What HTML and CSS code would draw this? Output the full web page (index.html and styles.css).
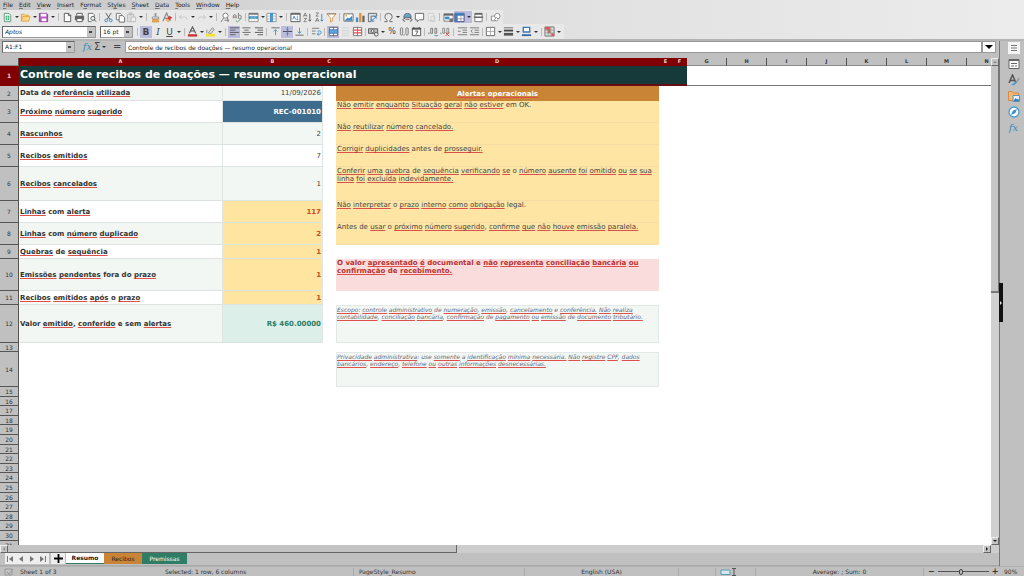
FILE: index.html
```html
<!DOCTYPE html>
<html lang="pt-BR">
<head>
<meta charset="utf-8">
<title>Controle de recibos de doações</title>
<link rel="stylesheet" href="styles.css">
</head>
<body>
<svg class="defs" aria-hidden="true">
  <symbol id="new" viewBox="0 0 12 12"><path d="M2.5 1.5h5l2 2v7h-7z" fill="#fff" stroke="#5a9a78"/><path d="M4 4h4v5H4z" fill="#43a878"/><path d="M4 6.5h4M6 4v5" stroke="#fff" stroke-width=".6"/></symbol>
  <symbol id="open" viewBox="0 0 12 12"><path d="M1.5 10V2.500h3l1 1h4V5" fill="#f6d68c" stroke="#e0a040"/><path d="M1.500 10l1.500-5h8l-1.500 5z" fill="#fbd589" stroke="#e5a648"/></symbol>
  <symbol id="save" viewBox="0 0 12 12"><path d="M1.500 1.500h8l1 1v8h-9z" fill="#b65fc0" stroke="#923ba0"/><path d="M3 2h6v3H3zM4 7h5v3H4z" fill="#fff"/></symbol>
  <symbol id="doc" viewBox="0 0 12 12"><path d="M2.500 1.500h5l2 2v7h-7zM7 1.500V4h2.500" fill="#fff" stroke="#555"/></symbol>
  <symbol id="print" viewBox="0 0 12 12"><path d="M3 4V1.500h6V4" fill="#fff" stroke="#555"/><path d="M1 4h10v5H1z" fill="#666"/><path d="M3 7h6v3.500H3z" fill="#fff" stroke="#555"/></symbol>
  <symbol id="preview" viewBox="0 0 12 12"><path d="M9 5V3L7.500 1.500h-5v9H6" fill="#fff" stroke="#666"/><circle cx="7.500" cy="7" r="2.200" fill="#e4edf4" stroke="#555"/><path d="M9 8.500l2 2" stroke="#444"/></symbol>
  <symbol id="cut" viewBox="0 0 12 12"><path d="M3 1l4.500 7M9 1L4.500 8" stroke="#555" fill="none"/><circle cx="3.500" cy="9.200" r="1.500" fill="none" stroke="#3b83bd"/><circle cx="8.500" cy="9.200" r="1.500" fill="none" stroke="#3b83bd"/></symbol>
  <symbol id="copy" viewBox="0 0 12 12"><path d="M1.500 1.500h4.500l1 1v6H1.500z" fill="#fff" stroke="#777"/><path d="M4.500 4h4l2 2v5h-6z" fill="#fff" stroke="#666"/></symbol>
  <symbol id="paste" viewBox="0 0 12 12"><path d="M1.500 2.500h7v8h-7zM3.500 1h3v2h-3z" fill="#ddd" stroke="#bbb"/><path d="M5.500 5.500h5v5h-5z" fill="#eee" stroke="#bbb"/></symbol>
  <symbol id="brush" viewBox="0 0 12 12"><path d="M5 1h2v4H5z" fill="#999"/><path d="M2.500 5.500h7v2h-7z" fill="#fff" stroke="#777" stroke-width=".8"/><path d="M3 8h6l.5 3h-7z" fill="#f0a848" stroke="#c98230" stroke-width=".6"/></symbol>
  <symbol id="clear" viewBox="0 0 12 12"><path d="M1 10L5 1l4 9M2.500 7H7" stroke="#888" fill="none" stroke-width="1.200"/><path d="M4 9l4-5 3 2-4 5z" fill="#e23b3b"/><path d="M4 9l1.500-2 3 2L7 11z" fill="#f6c070"/></symbol>
  <symbol id="undo" viewBox="0 0 12 12"><path d="M4 3L1.500 5.500 4 8M2 5.500h5q3 0 3 3" fill="none" stroke="#c6c6c6"/></symbol>
  <symbol id="redo" viewBox="0 0 12 12"><path d="M8 3l2.500 2.500L8 8M10 5.500H5q-3 0-3 3" fill="none" stroke="#c6c6c6"/></symbol>
  <symbol id="find" viewBox="0 0 12 12"><circle cx="6" cy="4" r="2.800" fill="#fff" stroke="#777"/><path d="M4 6.500L1 11M8 6l1 5M5 9h5" stroke="#777" fill="none"/></symbol>
  <symbol id="spell" viewBox="0 0 12 12"><path d="M1.500 7V4.500q0-1.500 1.500-1.500t1.500 1.500V7M1.500 5.500h3M7 1v6M7 4q3-1.500 3 1.500T7 7" stroke="#777" fill="none"/><path d="M4 9l2 2 4-4" stroke="#60a070" fill="none"/></symbol>
  <symbol id="row" viewBox="0 0 12 12"><path d="M1 1.500h10v9H1z" fill="#fff" stroke="#777" stroke-width=".8"/><path d="M1 1h10v2H1z" fill="#777"/><path d="M1 4.500h10v3H1z" fill="#3d97d3"/><path d="M4.300 3v7.500M7.600 3v7.500" stroke="#ccc" stroke-width=".7"/></symbol>
  <symbol id="col" viewBox="0 0 12 12"><path d="M1 1.500h10v9H1z" fill="#fff" stroke="#777" stroke-width=".8"/><path d="M4.300 1h3.400v10H4.300z" fill="#3d97d3"/><path d="M1 4.500h10M1 7.500h10" stroke="#999" stroke-width=".7"/></symbol>
  <symbol id="sort" viewBox="0 0 12 12"><path d="M1 1.500h10v9H1z" fill="#fff" stroke="#555"/><path d="M1 1h10v2H1z" fill="#666"/><path d="M3 8l1.500-3.500L6 8" stroke="#3d87c3" fill="none"/><path d="M8 4v5M7 8l1 1 1-1" stroke="#3d87c3" fill="none" stroke-width=".8"/></symbol>
  <symbol id="asc" viewBox="0 0 12 12"><path d="M1.500 5L3.500 1l2 4M2 4h3M2 7h3L2 10.500h3" stroke="#777" fill="none" stroke-width=".9"/><path d="M8.500 2v8M7 8.500L8.500 10 10 8.500" stroke="#555" fill="none"/></symbol>
  <symbol id="desc" viewBox="0 0 12 12"><path d="M2 1h3L2 4.500h3M1.500 10.500l2-4 2 4M2 9.500h3" stroke="#777" fill="none" stroke-width=".9"/><path d="M8.500 2v8M7 8.500L8.500 10 10 8.500" stroke="#3d87c3" fill="none"/></symbol>
  <symbol id="filter" viewBox="0 0 12 12"><path d="M1 2h10L7 6.500V10L5 11V6.500z" fill="#fff" stroke="#e09850"/><path d="M1 2h10" stroke="#777"/></symbol>
  <symbol id="image" viewBox="0 0 12 12"><path d="M1 2h10v8H1z" fill="#fff" stroke="#666"/><path d="M2 9l3-3 1.500 1L10 4v5.500H2z" fill="#3d8ec9"/><circle cx="3.500" cy="4" r="1" fill="#e5b34a"/></symbol>
  <symbol id="chart" viewBox="0 0 12 12"><path d="M1 6h2.500v5H1z" fill="#3d8ec9"/><path d="M4.500 1H7v10H4.500z" fill="#e89030"/><path d="M8 4h2.500v7H8z" fill="#666"/></symbol>
  <symbol id="pivot" viewBox="0 0 12 12"><path d="M1.500 1.500h9v3h-6v6h-3z" fill="#cfe4f3" stroke="#666"/><path d="M5.500 9.500l4-4M7.500 5h2.500v2.500M8 10H5.500V7.500" stroke="#3d87c3" fill="none"/></symbol>
  <symbol id="omega" viewBox="0 0 12 12"><path d="M1.500 10.500h3V9Q2 7.500 2 5q0-3.500 4-3.500T10 5q0 2.500-2.500 4v1.500h3" stroke="#666" fill="none"/></symbol>
  <symbol id="link" viewBox="0 0 12 12"><path d="M2 6q0-4.500 4-4.500T10 6z" fill="#63a8c8" stroke="#667"/><path d="M4 8h4M3.500 7q-2.500 0-2.500 1.500T3.500 10M8.500 7q2.500 0 2.500 1.500T8.500 10" stroke="#555" fill="none"/></symbol>
  <symbol id="comment" viewBox="0 0 12 12"><path d="M1.500 1.500h9v7H6l-2.500 2v-2h-2z" fill="#fff" stroke="#666"/></symbol>
  <symbol id="header" viewBox="0 0 12 12"><path d="M2.500 1.500h6v8h-6zM5.500 4.500h4v6h-4z" fill="#eee" stroke="#ccc"/></symbol>
  <symbol id="area" viewBox="0 0 12 12"><path d="M1 2h10v8H1z" fill="#fff" stroke="#777"/><path d="M1 2h10v2H1z" fill="#666"/><path d="M2 5h5v3H2z" fill="#3d8ec9"/><path d="M7 7h4v4H7z" fill="#777"/></symbol>
  <symbol id="freeze" viewBox="0 0 12 12"><path d="M1 1.500h10v9H1z" fill="#fff" stroke="#447"/><path d="M1 1h10v3H1zM1 4h3v7H1z" fill="#3d7ec0"/><path d="M7.500 1v10M1 7.500h10" stroke="#779" stroke-width=".7"/></symbol>
  <symbol id="split" viewBox="0 0 12 12"><path d="M2 1.500h8v9H2z" fill="#fff" stroke="#777"/><path d="M2 1h8v2H2zM1 5h10v1.500H1z" fill="#666"/></symbol>
  <symbol id="shapes" viewBox="0 0 12 12"><path d="M1.500 4.500h5v5h-5z" fill="#fff" stroke="#888"/><circle cx="8" cy="4.500" r="3" fill="#fff" stroke="#888"/><path d="M5 8l2-2 2 2-2 2z" fill="#fff" stroke="#888"/></symbol>
  <symbol id="fontcolor" viewBox="0 0 12 12"><path d="M2.500 8L6 1l3.500 7M4 5.500h4" stroke="#555" fill="none" stroke-width="1.200"/><path d="M1 9h10v2.500H1z" fill="#c9302c"/></symbol>
  <symbol id="marker" viewBox="0 0 12 12"><path d="M4 7l4-5 2 1.500L7 8H4z" fill="#ddd" stroke="#777" stroke-width=".8"/><path d="M2 4v4" stroke="#888"/><path d="M1 8.500h10v3H1z" fill="#f2e13a"/></symbol>
  <symbol id="left" viewBox="0 0 12 12"><path d="M1 2h10M1 4.500h6M1 7h10M1 9.500h6" stroke="#555"/></symbol>
  <symbol id="center" viewBox="0 0 12 12"><path d="M1.500 2h9M3.500 4.500h5M1.500 7h9M3.500 9.500h5" stroke="#666"/></symbol>
  <symbol id="right" viewBox="0 0 12 12"><path d="M2 2h9M5 4.500h6M2 7h9M5 9.500h6" stroke="#555"/></symbol>
  <symbol id="vtop" viewBox="0 0 12 12"><path d="M1.500 2h9" stroke="#666"/><path d="M6 10V4M4 6l2-2 2 2" stroke="#4a90c0" fill="none"/></symbol>
  <symbol id="vmid" viewBox="0 0 12 12"><path d="M1 6h10" stroke="#445"/><path d="M6 1v10M4.500 3L6 4.500 7.500 3M4.500 9L6 7.500 7.500 9" stroke="#4a70b0" fill="none" stroke-width=".8"/></symbol>
  <symbol id="vbot" viewBox="0 0 12 12"><path d="M1.500 10h9" stroke="#666"/><path d="M6 2v6M4 6l2 2 2-2" stroke="#4a90c0" fill="none"/></symbol>
  <symbol id="wrap" viewBox="0 0 12 12"><path d="M1 2.500h8M1 5.500h4M1 8.500h4" stroke="#777"/><path d="M7 5.500h2.500q1.500 0 1.500 1.500T9.500 9H7M8.500 7L7 9l1.500 1.500" stroke="#3d8ec9" fill="none"/></symbol>
  <symbol id="merge" viewBox="0 0 12 12"><path d="M1.500 1.500h9v9h-9zM6 1v3M6 8v3" fill="#fff" stroke="#667"/><path d="M1.500 4h9v4h-9z" fill="#5aa6dc" stroke="#3a6ea8" stroke-width=".8"/></symbol>
  <symbol id="faint" viewBox="0 0 12 12"><path d="M2 2h8M2 5h8M2 8h8M2 10.500h8" stroke="#d2d2d2"/></symbol>
  <symbol id="unmerge" viewBox="0 0 12 12"><path d="M1.500 1.500h9v9h-9zM6 1v10" fill="#fff" stroke="#777"/><path d="M1 4.500h10M1 7.500h10" stroke="#e05050" stroke-width="1.200"/></symbol>
  <symbol id="money" viewBox="0 0 12 12"><path d="M.5 3h10v5H.5z" fill="#bbb" stroke="#555"/><circle cx="5" cy="5.500" r="1.500" fill="#fff" stroke="#555"/><circle cx="9" cy="9" r="2" fill="#eee" stroke="#555"/></symbol>
  <symbol id="num" viewBox="0 0 12 12"><path d="M1.500 3q0-1 1.300-1T4 3v5.500Q4 10 2.800 10T1.500 8.500zM7.500 3q0-1 1.300-1T10 3v5.500Q10 10 8.800 10T7.500 8.500zM5.500 9v1.500" fill="none" stroke="#777"/></symbol>
  <symbol id="date" viewBox="0 0 12 12"><path d="M1.500 2.500h9v8h-9z" fill="#fff" stroke="#555"/><path d="M1 2h10v2H1z" fill="#555"/><path d="M3 1v2M9 1v2M4.500 5.500h3L5.500 9.500" stroke="#555" fill="none"/></symbol>
  <symbol id="adddec" viewBox="0 0 12 12"><path d="M1 7v2M3 2.500h2V8H3zM7.500 2.500h2V8h-2z" fill="none" stroke="#777"/><path d="M7 10.500h4" stroke="#4a90c0"/></symbol>
  <symbol id="deldec" viewBox="0 0 12 12"><path d="M1 7v2M3 2.500h2V8H3zM7.500 2.500h2V8h-2z" fill="none" stroke="#888"/><path d="M6 7l4 4M10 7l-4 4" stroke="#d84848"/></symbol>
  <symbol id="indent" viewBox="0 0 12 12"><path d="M1 2h10M6 4.500h5M6 7h5M1 9.500h10M1 5.700h3" stroke="#777"/></symbol>
  <symbol id="outdent" viewBox="0 0 12 12"><path d="M1 2h10M6 4.500h5M6 7h5M1 9.500h10M4 4L2 5.700 4 7.500" stroke="#777" fill="none"/></symbol>
  <symbol id="border" viewBox="0 0 12 12"><path d="M1.500 1.500h9v9h-9z" fill="#fff" stroke="#666"/><path d="M6 2v8M2 6h8" stroke="#aaa"/></symbol>
  <symbol id="lines" viewBox="0 0 12 12"><path d="M1 2h10" stroke="#666"/><path d="M1 5h10" stroke="#444" stroke-width="2"/><path d="M1 9h10" stroke="#555" stroke-width="3"/></symbol>
  <symbol id="bcolor" viewBox="0 0 12 12"><path d="M2.500 1.500h7v5h-7z" fill="#fff" stroke="#3a78b4" stroke-width="1.500"/><path d="M1 9h10v2H1z" fill="#3569a8"/></symbol>
  <symbol id="cond" viewBox="0 0 12 12"><path d="M1 1h10v10H1z" fill="#ddd" stroke="#777"/><path d="M1 1h6v3H1zM4 4h3v4H4zM8 8h3v3H8z" fill="#e05a50"/><path d="M4.500 1v10M7.500 1v10M1 4.500h10M1 7.500h10" stroke="#888" stroke-width=".6"/></symbol>
</svg>

<header class="top">
  <nav class="menu">
    <a href="#"><u>F</u>ile</a><a href="#"><u>E</u>dit</a><a href="#"><u>V</u>iew</a><a href="#"><u>I</u>nsert</a><a href="#">F<u>o</u>rmat</a><a href="#">St<u>y</u>les</a><a href="#"><u>S</u>heet</a><a href="#"><u>D</u>ata</a><a href="#"><u>T</u>ools</a><a href="#"><u>W</u>indow</a><a href="#"><u>H</u>elp</a>
  </nav>
  <div class="bar">
    <button class="drop" aria-label="New"><svg><use href="#new"/></svg></button>
    <button class="drop" aria-label="Open"><svg><use href="#open"/></svg></button>
    <button class="drop" aria-label="Save"><svg><use href="#save"/></svg></button>
    <i></i>
    <button aria-label="Export"><svg><use href="#doc"/></svg></button>
    <button aria-label="Print"><svg><use href="#print"/></svg></button>
    <button aria-label="Preview"><svg><use href="#preview"/></svg></button>
    <i></i>
    <button aria-label="Cut"><svg><use href="#cut"/></svg></button>
    <button aria-label="Copy"><svg><use href="#copy"/></svg></button>
    <button class="drop" aria-label="Paste"><svg><use href="#paste"/></svg></button>
    <i></i>
    <button aria-label="Clone"><svg><use href="#brush"/></svg></button>
    <button aria-label="Clear"><svg><use href="#clear"/></svg></button>
    <i></i>
    <button class="drop" aria-label="Undo"><svg><use href="#undo"/></svg></button>
    <button class="drop" aria-label="Redo"><svg><use href="#redo"/></svg></button>
    <i></i>
    <button aria-label="Find"><svg><use href="#find"/></svg></button>
    <button aria-label="Spelling"><svg><use href="#spell"/></svg></button>
    <i></i>
    <button class="drop" aria-label="Row"><svg><use href="#row"/></svg></button>
    <button class="drop" aria-label="Column"><svg><use href="#col"/></svg></button>
    <i></i>
    <button aria-label="Sort"><svg><use href="#sort"/></svg></button>
    <button aria-label="Ascending"><svg><use href="#asc"/></svg></button>
    <button aria-label="Descending"><svg><use href="#desc"/></svg></button>
    <button aria-label="Filter"><svg><use href="#filter"/></svg></button>
    <i></i>
    <button aria-label="Image"><svg><use href="#image"/></svg></button>
    <button aria-label="Chart"><svg><use href="#chart"/></svg></button>
    <button aria-label="Pivot"><svg><use href="#pivot"/></svg></button>
    <i></i>
    <button class="drop" aria-label="Symbol"><svg><use href="#omega"/></svg></button>
    <button aria-label="Link"><svg><use href="#link"/></svg></button>
    <button aria-label="Comment"><svg><use href="#comment"/></svg></button>
    <button aria-label="Headers"><svg><use href="#header"/></svg></button>
    <i></i>
    <button aria-label="Print area"><svg><use href="#area"/></svg></button>
    <button class="drop on" aria-label="Freeze"><svg><use href="#freeze"/></svg></button>
    <button aria-label="Split"><svg><use href="#split"/></svg></button>
    <i></i>
    <button aria-label="Shapes"><svg><use href="#shapes"/></svg></button>
  </div>
  <div class="bar format">
    <select class="box font" aria-label="Font"><option>Aptos</option></select>
    <select class="box size" aria-label="Size"><option>16 pt</option></select>
    <i></i>
    <button class="on" aria-label="Bold"><b>B</b></button>
    <button aria-label="Italic"><em>I</em></button>
    <button class="drop" aria-label="Underline"><u>U</u></button>
    <i></i>
    <button class="drop" aria-label="Font color"><svg><use href="#fontcolor"/></svg></button>
    <button class="drop" aria-label="Highlight"><svg><use href="#marker"/></svg></button>
    <i></i>
    <button class="on" aria-label="Left"><svg><use href="#left"/></svg></button>
    <button aria-label="Center"><svg><use href="#center"/></svg></button>
    <button aria-label="Right"><svg><use href="#right"/></svg></button>
    <i></i>
    <button aria-label="Top"><svg><use href="#vtop"/></svg></button>
    <button class="on" aria-label="Middle"><svg><use href="#vmid"/></svg></button>
    <button aria-label="Bottom"><svg><use href="#vbot"/></svg></button>
    <i></i>
    <button aria-label="Wrap"><svg><use href="#wrap"/></svg></button>
    <i></i>
    <button class="on" aria-label="Merge"><svg><use href="#merge"/></svg></button>
    <button aria-label="Merge cells"><svg><use href="#faint"/></svg></button>
    <button aria-label="Unmerge"><svg><use href="#unmerge"/></svg></button>
    <i></i>
    <button class="drop" aria-label="Currency"><svg><use href="#money"/></svg></button>
    <button aria-label="Percent"><span>%</span></button>
    <button aria-label="Number"><svg><use href="#num"/></svg></button>
    <button aria-label="Date"><svg><use href="#date"/></svg></button>
    <i></i>
    <button aria-label="Add decimal"><svg><use href="#adddec"/></svg></button>
    <button aria-label="Delete decimal"><svg><use href="#deldec"/></svg></button>
    <i></i>
    <button aria-label="Indent"><svg><use href="#indent"/></svg></button>
    <button aria-label="Outdent"><svg><use href="#outdent"/></svg></button>
    <i></i>
    <button class="drop" aria-label="Borders"><svg><use href="#border"/></svg></button>
    <button class="drop" aria-label="Border style"><svg><use href="#lines"/></svg></button>
    <button class="drop" aria-label="Border color"><svg><use href="#bcolor"/></svg></button>
    <i></i>
    <button class="drop" aria-label="Conditional"><svg><use href="#cond"/></svg></button>
  </div>
</header>

<main class="work">
  <section class="left">
    <div class="formula">
      <select class="box name" aria-label="Name box"><option>A1:F1</option></select>
      <button class="fx" aria-label="Function wizard"><em>fx</em></button>
      <button class="sum drop" aria-label="Sum">Σ</button>
      <button class="sum" aria-label="Formula">=</button>
      <input type="text" aria-label="Input line" value="Controle de recibos de doações — resumo operacional">
      <button class="expand" aria-label="Expand"></button>
    </div>
    <div class="view">
      <div class="sheet">
        <table>
          <colgroup><col class="ch"><col class="ca"><col class="cb"><col class="cs"><col class="cd"><col class="ce"><col class="ce"><col class="cg"><col class="cg"><col class="cg"><col class="cg"><col class="cg"><col class="cg"><col class="cg"><col class="cg"></colgroup>
          <thead><tr><th></th><th class="sel">A</th><th class="sel">B</th><th class="sel">C</th><th class="sel">D</th><th class="sel">E</th><th class="sel">F</th><th>G</th><th>H</th><th>I</th><th>J</th><th>K</th><th>L</th><th>M</th><th>N</th></tr></thead>
          <tbody>
            <tr class="r1"><th class="sel">1</th><td class="title" colspan="6">Controle de recibos de doações — resumo operacional</td><td colspan="8" class="frozen"></td></tr>
            <tr class="h15 alt"><th>2</th><td>Data de <u>referência</u> <u>utilizada</u></td><td>11/09/2026</td><td></td><td class="ah"><u>Alertas</u> <u>operacionais</u></td></tr>
            <tr class="h22"><th>3</th><td><u>Próximo</u> <u>número</u> <u>sugerido</u></td><td class="blue">REC-001010</td><td></td><td class="al"><u>Não</u> <u>emitir</u> <u>enquanto</u> <u>Situação</u> <u>geral</u> <u>não</u> <u>estiver</u> em OK.</td></tr>
            <tr class="h22 alt"><th>4</th><td><u>Rascunhos</u></td><td>2</td><td></td><td class="al"><u>Não</u> <u>reutilizar</u> <u>número</u> <u>cancelado.</u></td></tr>
            <tr class="h22"><th>5</th><td><u>Recibos</u> <u>emitidos</u></td><td>7</td><td></td><td class="al"><u>Corrigir</u> <u>duplicidades</u> antes de <u>prosseguir.</u></td></tr>
            <tr class="h34 alt"><th>6</th><td><u>Recibos</u> <u>cancelados</u></td><td>1</td><td></td><td class="al"><u>Conferir</u> <u>uma</u> <u>quebra</u> de <u>sequência</u> <u>verificando</u> <u>se</u> o <u>número</u> <u>ausente</u> <u>foi</u> <u>omitido</u> <u>ou</u> <u>se</u> <u>sua</u> <u>linha</u> <u>foi</u> <u>excluída</u> <u>indevidamente.</u></td></tr>
            <tr class="h22"><th>7</th><td><u>Linhas</u> com <u>alerta</u></td><td class="warn">117</td><td></td><td class="al"><u>Não</u> <u>interpretar</u> o <u>prazo</u> <u>interno</u> <u>como</u> <u>obrigação</u> legal.</td></tr>
            <tr class="h22 alt"><th>8</th><td><u>Linhas</u> com <u>número</u> <u>duplicado</u></td><td class="warn">2</td><td></td><td class="al">Antes de <u>usar</u> o <u>próximo</u> <u>número</u> <u>sugerido</u>, <u>confirme</u> <u>que</u> <u>não</u> <u>houve</u> <u>emissão</u> <u>paralela.</u></td></tr>
            <tr class="h14"><th>9</th><td><u>Quebras</u> de <u>sequência</u></td><td class="warn">1</td><td></td><td></td></tr>
            <tr class="h32 alt"><th>10</th><td><u>Emissões</u> <u>pendentes</u> fora do <u>prazo</u></td><td class="warn">1</td><td></td><td class="red">O valor <u>apresentado</u> <u>é</u> documental e <u>não</u> <u>representa</u> <u>conciliação</u> <u>bancária</u> <u>ou</u> <u>confirmação</u> de <u>recebimento.</u></td></tr>
            <tr class="h14"><th>11</th><td><u>Recibos</u> <u>emitidos</u> <u>após</u> o <u>prazo</u></td><td class="warn">1</td><td></td><td></td></tr>
            <tr class="h38 alt"><th>12</th><td>Valor <u>emitido</u>, <u>conferido</u> e sem <u>alertas</u></td><td class="green">R$ 460.00000</td><td></td><td class="note"><u>Escopo</u>: <u>controle</u> <u>administrativo</u> de <u>numeração</u>, <u>emissão</u>, <u>cancelamento</u> e <u>conferência.</u> <u>Não</u> <u>realiza</u> <u>contabilidade</u>, <u>conciliação</u> <u>bancária</u>, <u>confirmação</u> de <u>pagamento</u> <u>ou</u> <u>emissão</u> de <u>documento</u> <u>tributário.</u></td></tr>
            <tr class="h9 off"><th>13</th><td></td></tr>
            <tr class="h35 off"><th>14</th><td></td><td></td><td></td><td class="note"><u>Privacidade</u> <u>administrativa</u>: use <u>somente</u> a <u>identificação</u> <u>mínima</u> <u>necessária.</u> <u>Não</u> <u>registre</u> <u>CPF</u>, <u>dados</u> <u>bancários</u>, <u>endereço</u>, <u>telefone</u> <u>ou</u> <u>outras</u> <u>informações</u> <u>desnecessárias.</u></td></tr>
          </tbody>
          <tbody class="rest">
            <tr><th>15</th></tr><tr><th>16</th></tr><tr><th>17</th></tr><tr><th>18</th></tr><tr><th>19</th></tr><tr><th>20</th></tr><tr><th>21</th></tr><tr><th>22</th></tr><tr><th>23</th></tr><tr><th>24</th></tr><tr><th>25</th></tr><tr><th>26</th></tr><tr><th>27</th></tr><tr><th>28</th></tr><tr><th>29</th></tr><tr><th>30</th></tr><tr><th>31</th></tr>
          </tbody>
        </table>
      </div>
      <div class="vscroll"><span class="knob up"></span><div class="vthumb"></div><div class="track"></div><span class="knob down"></span></div>
    </div>
    <div class="hscroll"><span class="knob prev"></span><div class="hthumb"></div><div class="track"></div><span class="knob next"></span></div>
    <div class="tabs">
      <div class="nav">
        <button aria-label="First"><svg viewBox="0 0 8 8"><path d="M7 1v6L3 4zM1 1h1v6H1z"/></svg></button>
        <button aria-label="Previous"><svg viewBox="0 0 8 8"><path d="M6 1v6L2 4z"/></svg></button>
        <button aria-label="Next"><svg viewBox="0 0 8 8"><path d="M2 1v6l4-3z"/></svg></button>
        <button aria-label="Last"><svg viewBox="0 0 8 8"><path d="M1 1v6l4-3zM6 1h1v6H6z"/></svg></button>
      </div>
      <button class="add" aria-label="Add sheet"><svg viewBox="0 0 10 10"><path d="M4 0h2v4h4v2H6v4H4V6H0V4h4z"/></svg></button>
      <button class="tab cur">Resumo</button><button class="tab orange">Recibos</button><button class="tab teal">Premissas</button>
    </div>
  </section>
  <aside class="side">
    <button aria-label="Settings"><svg viewBox="0 0 12 12"><path d="M0 0h12v12H0z" fill="#f4f4f4"/><path d="M3 3.500h6M3 6h6M3 8.500h6" stroke="#777"/></svg></button>
    <button aria-label="Properties"><svg viewBox="0 0 12 12"><path d="M1 1.500h10v9H1z" fill="#fff" stroke="#666"/><path d="M1 1h10v2H1z" fill="#666"/><path d="M3 5.500h6M3 8h3M8 7v2" stroke="#666"/></svg></button>
    <button aria-label="Styles"><svg viewBox="0 0 12 12"><path d="M1 9L4.500 1 8 9M2.200 6.500h4.500" stroke="#555" fill="none" stroke-width="1.500"/><path d="M11.500 4L8 8.500" stroke="#999" stroke-width="1.500"/><path d="M3 10.500q3 2 6-2l-1.500-1q-2 2.500-4.500 3" fill="#3f9bd8"/></svg></button>
    <button aria-label="Gallery"><svg viewBox="0 0 12 12"><path d="M.5 10.500v-9H4l1 1.500h5.500v7.500z" fill="#f3b877" stroke="#d98c40"/><path d="M5 5.500h6.500v6H5z" fill="#e4f2fb" stroke="#5a91b6"/><path d="M5.500 11l2-3 1.500 1.500 1-1 1.500 2.500z" fill="#2f80b8"/></svg></button>
    <button aria-label="Navigator"><svg viewBox="0 0 12 12"><circle cx="6" cy="6" r="5" fill="#fff" stroke="#4b9ccc" stroke-width="1.300"/><path d="M9 3L7.200 7.200 3 9l1.800-4.200z" fill="#3a8fc8"/></svg></button>
    <button class="fx" aria-label="Functions"><em>fx</em></button>
    <div class="sash"></div>
  </aside>
</main>
<footer class="status">
  <span class="s0"><svg viewBox="0 0 10 8"><path d="M1 1h7v6H1zM3 4l2 2 4-5" fill="none" stroke="#999"/></svg></span>
  <span class="s1">Sheet 1 of 3</span>
  <span class="s2">Selected: 1 row, 6 columns</span>
  <span class="s3">PageStyle_Resumo</span>
  <span class="s4">English (USA)</span>
  <span class="s5"></span>
  <span class="s6"><svg viewBox="0 0 18 8"><path d="M1 2h9v4.500H1z" fill="#d5e6ee" stroke="#5a9cb8"/><path d="M12 .5h4M12 7.500h4M14 .5v7" stroke="#555"/></svg></span>
  <span class="s7">Average: ; Sum: 0</span>
  <span class="zoom"><b>−</b><input type="range" aria-label="Zoom" min="0" max="100" value="45"><b>+</b></span>
  <span class="s9">90%</span>
</footer>
</body>
</html>
```
FILE: styles.css
```css
* { box-sizing: border-box; }
body {
  margin: 0;
  height: 100vh;
  display: flex;
  flex-direction: column;
  overflow: hidden;
  background: #c0c0c0;
  color: #222;
  font: 6px/8px "DejaVu Sans", sans-serif;
}
button, input, select { font: inherit; color: inherit; margin: 0; padding: 0; border: 0; background: none; border-radius: 0; }
.defs { display: none; }

.top { background: linear-gradient(90deg, #c6c6c6, #d8d8d8 30%, #e2e2e2 60%, #ececec); border-bottom: 2px solid #b4b4b4; }
.menu { display: flex; gap: 6px; height: 10px; padding: 1px 3px; }
.menu a { color: #222; text-decoration: none; }
.menu u { text-decoration-thickness: 1px; text-decoration-color: #777; }
.bar { display: flex; align-items: center; width: max-content; height: 14px; padding: 0 2px; background: #e8e8e8; }
.format { height: 15px; }
.bar i { width: 5px; height: 8px; border-left: 1px solid #bbb; margin-left: 2px; margin-right: -2px; }
.bar button { display: flex; align-items: center; justify-content: center; width: 12px; height: 12px; }
.bar svg { width: 11px; height: 11px; flex: none; }
.bar .drop { width: 18px; justify-content: flex-start; }
.drop::after { content: ""; margin-left: 2px; border: 2px solid transparent; border-top-color: #333; border-bottom: 0; }
.bar .on { background: #bcbcdc; }
.bar b, .bar em, .bar u, .bar span { width: 11px; text-align: center; font-size: 9px; line-height: 10px; color: #444; }
.bar em { font-family: "DejaVu Serif", serif; }
.bar span { font-size: 8px; }
.box {
  height: 12px;
  padding: 0 2px;
  border: 1px solid #666;
  border-right-color: #999;
  border-bottom-color: #999;
  appearance: none;
  background:
    linear-gradient(#444, #444) right 3px center / 3px 2px no-repeat,
    linear-gradient(#c4c4c4, #c4c4c4) right / 8px 100% no-repeat,
    #fff;
}
.font { width: 94px; margin-right: 4px; font-style: italic; }
.size { width: 33px; margin-right: 2px; }

.work { flex: 1; min-height: 0; display: flex; }
.left { flex: 1; min-width: 0; display: flex; flex-direction: column; border-right: 1px solid #777; }
.formula { display: flex; align-items: center; height: 17px; padding: 0 3px 5px 2px; }
.name { width: 73px; margin-right: 6px; }
.fx { width: 13px; color: #3d8bbd; font: 10px/12px "DejaVu Serif", serif; }
.sum { display: flex; align-items: center; width: 12px; color: #444; font-size: 10px; }
.sum.drop { width: 19px; }
.formula input { flex: 1; min-width: 0; height: 12px; padding: 0 2px; background: #fff; border: 1px solid #999; }
.expand { width: 14px; height: 12px; background: #fff; border: 1px solid #999; display: flex; align-items: center; justify-content: center; }
.expand::after { content: ""; border: 4px solid transparent; border-top-color: #000; border-bottom: 0; }

.view { flex: 1; min-height: 0; display: flex; }
.sheet { flex: 1; min-width: 0; overflow: hidden; background: #fff; }
table { table-layout: fixed; width: 1007px; border-collapse: separate; border-spacing: 0; }
.ch { width: 19px; }
.ca { width: 204px; }
.cb { width: 100px; }
.cs { width: 13px; }
.cd { width: 323px; }
.ce { width: 14px; }
.cg { width: 40px; }
th { padding: 0; background: #c0c0c0; border-right: 1px solid #555; border-bottom: 1px solid #555; color: #333; font-weight: normal; line-height: 7px; vertical-align: middle; }
thead th { height: 8px; border-bottom-color: #888; font-size: 5px; font-weight: bold; }
th.sel { background: #800000; border-color: #800000; color: #e8d0d0; font-weight: bold; }
td { padding: 0 1px; vertical-align: middle; overflow: hidden; }
td u { text-decoration: underline 1px #e0504a; text-decoration-skip-ink: none; text-underline-offset: 1px; }
.r1 { height: 20px; }
.frozen { border-bottom: 1px solid #777; }
.h9 { height: 9px; }
.h14 { height: 14px; }
.h15 { height: 15px; }
.h22 { height: 22px; }
.h32 { height: 32px; }
.h34 { height: 34px; }
.h35 { height: 35px; }
.h38 { height: 38px; }
tr[class^="h"] td:nth-child(2) { font-weight: bold; font-size: 7px; color: #333; }
tr[class^="h"] td:nth-child(3) { text-align: right; font-size: 7px; color: #444; }
tr[class^="h"]:not(.off) td:nth-child(2), tr[class^="h"]:not(.off) td:nth-child(3) { border-right: 1px solid #e0e6e4; border-bottom: 1px solid #dde3e1; }
.alt td:nth-child(2), .alt td:nth-child(3) { background: #f2f7f4; }
tr .title { padding: 0 1px; background: #16393a; border-bottom: 2px solid #660c12; color: #fff; font-size: 11px; font-weight: bold; line-height: 14px; white-space: nowrap; }
tr[class^="h"] td.blue:nth-child(3) { background: #3e6c8e; color: #fff; font-weight: bold; }
tr[class^="h"] td.warn:nth-child(3) { background: #ffe5a0; color: #c0522c; font-weight: bold; }
tr[class^="h"] td.green:nth-child(3) { background: #dcefe8; color: #2e7d64; font-weight: bold; }
.ah { background: #c98535; color: #fff; text-align: center; font-size: 7px; font-weight: bold; }
.al { background: #ffe5a4; border-bottom: 1px solid #f3dda4; color: #444; font-size: 7px; vertical-align: top; }
.red { background: #fadcdc; color: #b83232; font-size: 7px; font-weight: bold; vertical-align: top; }
.note { background: #f2f7f4; border: 1px solid #e2e8e5; padding: 0; color: #667; line-height: 7px; font-style: italic; vertical-align: top; }
.rest tr { height: 10px; }
.rest tr:nth-child(5n+2), .rest tr:nth-child(5n+4) { height: 9px; }

.vscroll { width: 8px; display: flex; flex-direction: column; background: #d0d0d0; }
.vthumb { flex: 48; background: #c6c6c6; border-right: 1px solid #777; border-bottom: 2px solid #777; }
.track { flex: 52; }
.knob { display: flex; align-items: center; justify-content: center; width: 8px; height: 8px; background: #c4c4c4; border: 1px solid #eee; border-right-color: #666; border-bottom-color: #666; }
.knob::after { content: ""; border: 2px solid transparent; }
.up::after { border-top: 0; border-bottom-color: #888; }
.down::after { border-bottom: 0; border-top-color: #222; }
.prev::after { border-left: 0; border-right-color: #888; }
.next::after { border-right: 0; border-left-color: #222; }
.hscroll { display: flex; height: 8px; padding-right: 8px; background: #cdcdcd; }
.hthumb { flex: 46; background: #c3c3c3; border-right: 1px solid #666; border-bottom: 1px solid #666; }
.hscroll .track { flex: 54; }
.tabs { display: flex; height: 13px; padding: 0 5px; border-bottom: 1px solid #aaa; align-items: flex-start; }
.nav { display: flex; background: #eee; }
.nav button { display: flex; align-items: center; width: 11px; height: 11px; padding: 1px; }
.nav svg { width: 8px; height: 8px; fill: #777; }
.add { display: flex; align-items: center; justify-content: center; width: 14px; height: 11px; margin: 0 1px 0 2px; background: #eee; }
.add svg { width: 9px; height: 9px; }
.tab { height: 11px; width: 38px; }
.cur { background: #fff; font-weight: bold; border-bottom: 1px solid #2e7d64; }
.orange { background: #c98535; }
.teal { width: 45px; background: #2e7d64; color: #fff; }

.side { position: relative; width: 24px; display: flex; flex-direction: column; align-items: center; gap: 4px; padding-top: 1px; }
.side button { width: 12px; height: 12px; margin-left: 3px; }
.side svg { display: block; width: 12px; height: 12px; }
.sash { position: absolute; left: -1px; top: 242px; width: 4px; height: 39px; display: flex; align-items: center; justify-content: center; background: #111; }
.sash::after { content: ""; border: 2px solid transparent; border-left-color: #ddd; border-right: 0; }

.status { display: flex; align-items: center; height: 10px; border-top: 1px solid #b0b0b0; color: #333; }
.status span { white-space: nowrap; }
.s0 { width: 20px; padding-left: 4px; }
.s0 svg { display: block; width: 10px; height: 8px; }
.s1 { width: 145px; }
.s2 { width: 189px; border-right: 1px solid #aaa; }
.s3 { width: 171px; padding-left: 5px; border-right: 1px solid #aaa; }
.s4 { flex: 1; text-align: center; border-right: 1px solid #aaa; }
.s5 { width: 36px; }
.s6 { width: 41px; border: solid #aaa; border-width: 0 1px; padding-left: 4px; }
.s6 svg { display: block; width: 18px; height: 8px; }
.s7 { width: 168px; text-align: center; border-right: 1px solid #aaa; }
.zoom { display: flex; align-items: center; gap: 3px; width: 80px; padding-left: 4px; }
.zoom b { font-size: 8px; }
.zoom input { width: 51px; height: 8px; appearance: none; background: linear-gradient(#555, #555) center / 100% 1px no-repeat; }
.zoom input::-webkit-slider-thumb { appearance: none; width: 4px; height: 6px; background: #bbb; border: 1px solid #444; border-radius: 2px; }
.s9 { width: 20px; }
```
